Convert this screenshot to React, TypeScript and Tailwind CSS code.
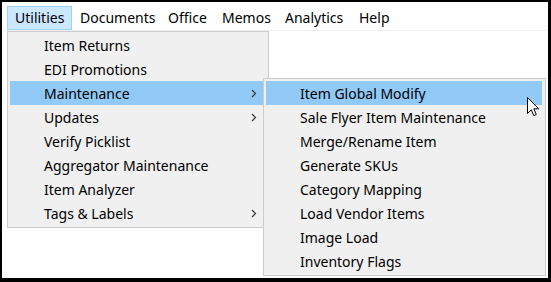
import React from "react";

const mainItems: { label: string; sub?: boolean; active?: boolean }[] = [
  { label: "Item Returns" },
  { label: "EDI Promotions" },
  { label: "Maintenance", sub: true, active: true },
  { label: "Updates", sub: true },
  { label: "Verify Picklist" },
  { label: "Aggregator Maintenance" },
  { label: "Item Analyzer" },
  { label: "Tags & Labels", sub: true },
];

const subItems: { label: string; active?: boolean }[] = [
  { label: "Item Global Modify", active: true },
  { label: "Sale Flyer Item Maintenance" },
  { label: "Merge/Rename Item" },
  { label: "Generate SKUs" },
  { label: "Category Mapping" },
  { label: "Load Vendor Items" },
  { label: "Image Load" },
  { label: "Inventory Flags" },
];

const menus: { label: string; w: string; active?: boolean }[] = [
  { label: "Utilities", w: "w-[65px]", active: true },
  { label: "Documents", w: "w-[88px]" },
  { label: "Office", w: "w-[54px]" },
  { label: "Memos", w: "w-[63px]" },
  { label: "Analytics", w: "w-[74px]" },
  { label: "Help", w: "w-[50px]" },
];

function Chevron() {
  return (
    <svg width="6" height="9" viewBox="0 0 6 9" className="block">
      <polyline points="1,1 4.5,4.5 1,8" fill="none" stroke="#333" strokeWidth="1.2" />
    </svg>
  );
}

export default function App() {
  return (
    <div
      className="relative w-[551px] h-[282px] bg-white border-black border-l-2 border-t-2 border-r-[3px] border-b-4 text-black overflow-hidden"
      style={{ fontFamily: '"Noto Sans", "Open Sans", sans-serif' }}
    >
      {/* Menu bar */}
      <div className="flex pt-[4px] pl-[5px] h-[29px] border-b border-[#f0f0f0] text-[14px]">
        {menus.map((m) => (
          <div
            key={m.label}
            className={`${m.w} h-[24px] flex items-center px-[7px] border leading-none ${
              m.active ? "bg-[#cce8ff] border-[#99d1ff]" : "border-transparent"
            }`}
          >
            {m.label}
          </div>
        ))}
      </div>

      {/* Dropdown */}
      <div className="absolute left-[5px] top-[29px] w-[262px] h-[197px] bg-[#f0f0f0] border border-[#cccccc] pt-[1px] px-[2px] text-[14px]">
        {mainItems.map((it) => (
          <div
            key={it.label}
            className={`h-[24px] flex items-center pl-[34px] pr-[9px] ${it.active ? "bg-[#91c9f7]" : ""}`}
          >
            <span className="flex-1 whitespace-nowrap">{it.label}</span>
            {it.sub && <Chevron />}
          </div>
        ))}
      </div>

      {/* Submenu */}
      <div className="absolute left-[261px] top-[76px] w-[283px] h-[198px] bg-[#f0f0f0] border border-[#cccccc] pt-[2px] pl-[2px] pr-[3px] text-[14px]">
        {subItems.map((it) => (
          <div
            key={it.label}
            className={`h-[24px] flex items-center pl-[34px] ${it.active ? "bg-[#91c9f7]" : ""}`}
          >
            <span className="whitespace-nowrap">{it.label}</span>
          </div>
        ))}
      </div>

      {/* Mouse cursor */}
      <svg
        className="absolute left-[525px] top-[95px]"
        width="13"
        height="21"
        viewBox="0 0 13 21"
      >
        <path
          d="M0.5 0.5 L0.5 16.5 L4.3 12.8 L6.8 18.6 L9.3 17.5 L6.8 11.8 L11.8 11.8 Z"
          fill="#fff"
          stroke="#000"
          strokeWidth="1"
          strokeLinejoin="miter"
        />
      </svg>
    </div>
  );
}
